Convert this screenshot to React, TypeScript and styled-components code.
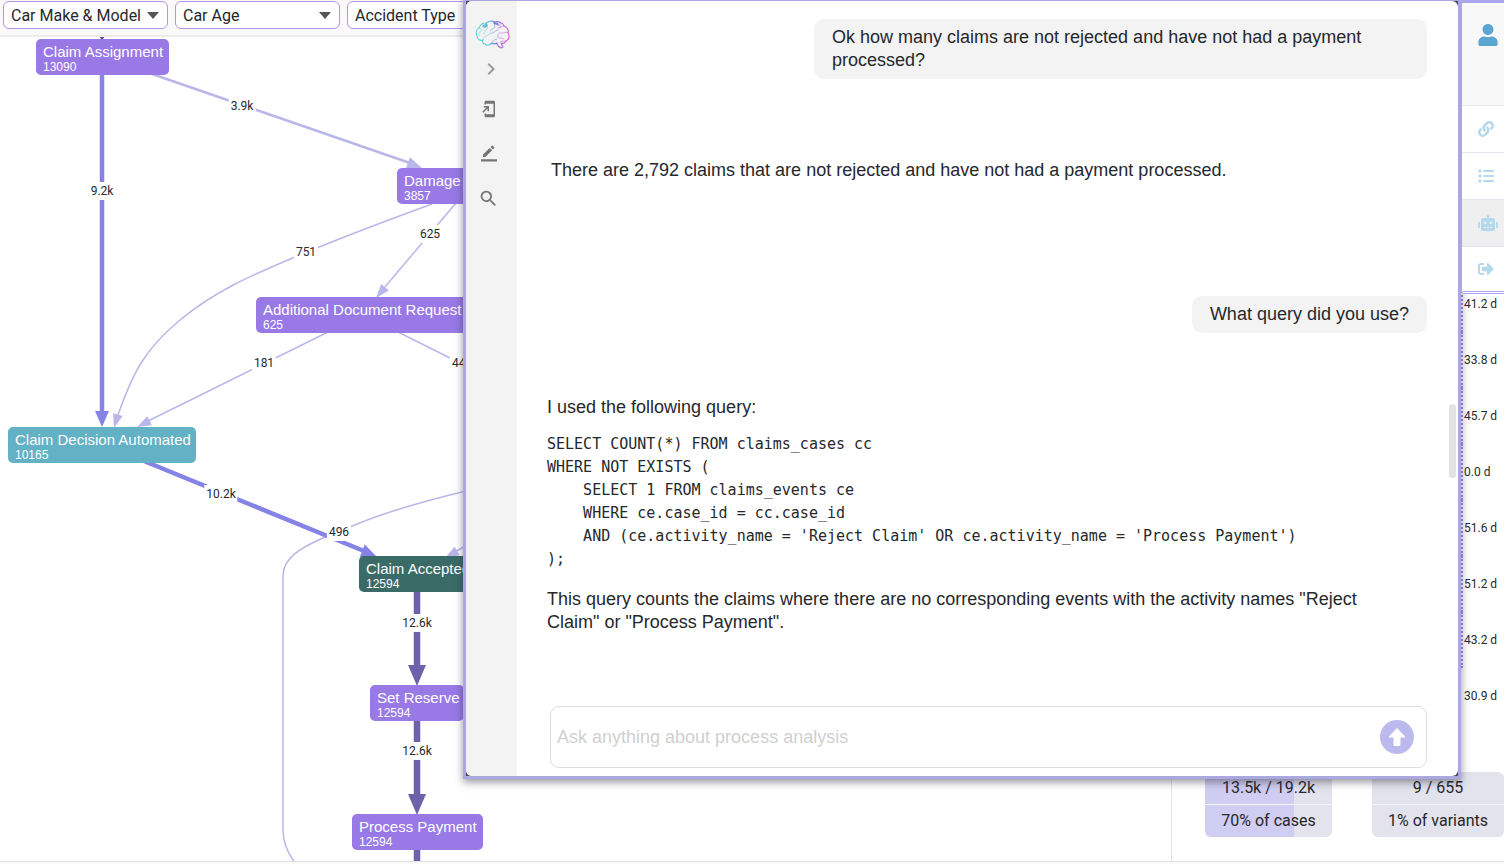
import React from 'react';
import styled, { createGlobalStyle } from 'styled-components';
import { FaUser, FaLink, FaRobot, FaSignOutAlt } from 'react-icons/fa';
import { FaList } from 'react-icons/fa6';
import { MdChevronRight, MdAddToHomeScreen, MdSearch } from 'react-icons/md';

const sans = '"Liberation Sans", Arial, sans-serif';
const roboto = 'Roboto, sans-serif';

const GlobalStyle = createGlobalStyle`
  *, *::before, *::after { box-sizing: border-box; }
  body { margin: 0; background: #fff; color: #25282c; font-family: ${roboto}; }
  button, input, select { font: inherit; color: inherit; margin: 0; }
  button { border: 0; padding: 0; background: none; cursor: pointer; }
`;

const Page = styled.div`
  position: relative;
  display: flex;
  flex-direction: column;
  height: 100vh;
  overflow: hidden;
`;

const FilterBar = styled.header`
  display: flex;
  flex: none;
  gap: 7px;
  height: 37px;
  padding: 1px 3px 0;
  background: #f9f9f9;
  border-bottom: 2px solid #ebebeb;
`;

const FilterField = styled.label`
  position: relative;
  flex: none;
  width: 165px;
  height: 28px;
`;

const FilterSelect = styled.select`
  appearance: none;
  width: 100%;
  height: 100%;
  padding: 0 7px;
  border: 1px solid #b294e8;
  border-radius: 6px;
  background: #fff;
  font-size: 16px;
`;

const FilterArrow = styled.svg`
  position: absolute;
  right: 9px;
  top: 11px;
  pointer-events: none;
`;

const Workspace = styled.div`
  display: flex;
  flex: 1;
  min-height: 0;
`;

const Canvas = styled.main`
  position: relative;
  flex: 1;
  overflow: hidden;
`;

const Edges = styled.svg`
  position: absolute;
  inset: 0;
  width: 100%;
  height: 100%;
`;

const Node = styled.div<{ $x: number; $y: number; $w: number; $fill?: string }>`
  position: absolute;
  left: ${(p) => p.$x}px;
  top: ${(p) => p.$y - 37}px;
  width: ${(p) => p.$w}px;
  height: 36px;
  padding: 4px 0 0 7px;
  border-radius: 5px;
  background: ${(p) => p.$fill ?? '#9879e6'};
  color: #fff;
  font-family: ${sans};
  white-space: nowrap;
`;

const NodeName = styled.div`
  font-size: 15px;
  line-height: 18px;
`;

const NodeCount = styled.div`
  font-size: 12px;
  line-height: 12px;
`;

const EdgeLabel = styled.span<{ $x: number; $y: number }>`
  position: absolute;
  left: ${(p) => p.$x}px;
  top: ${(p) => p.$y - 37}px;
  transform: translate(-50%, -50%);
  padding: 0 2px;
  background: #fff;
  font-size: 12px;
  line-height: 18px;
`;

const SidePanel = styled.aside`
  display: flex;
  flex: none;
  flex-direction: column;
  justify-content: space-between;
  width: 333px;
  padding: 239px 0 24px;
  border-left: 1px solid #e4e4e4;
`;

const Durations = styled.ul`
  align-self: flex-end;
  width: 43px;
  margin: 0;
  padding: 0;
  list-style: none;
`;

const Duration = styled.li`
  padding-left: 1px;
  border-left: 2px dotted #9c92dc;
  font-size: 12px;
  line-height: 56px;
  white-space: nowrap;
  &:last-child { border-left-color: transparent; }
`;

const Stats = styled.div`
  display: flex;
  gap: 40px;
  padding-left: 33px;
`;

const Stat = styled.div<{ $share: number; $grow?: boolean }>`
  flex: ${(p) => (p.$grow ? '1' : '0 0 127px')};
  border-radius: 6px;
  overflow: hidden;
  background: linear-gradient(to right, #d0cdf2 ${(p) => p.$share}%, #e3e3ee ${(p) => p.$share}%);
  font-size: 16px;
  line-height: 32px;
  text-align: center;
`;

const StatLine = styled.div`
  & + & { border-top: 1px solid #f4f4fb; }
`;

const Footer = styled.footer`
  flex: none;
  height: 3px;
  border-top: 1px solid #e2e2e2;
  background: #fafafa;
`;

const Menu = styled.nav`
  position: absolute;
  top: 0;
  right: 0;
  display: flex;
  flex-direction: column;
  width: 43px;
  background: #fff;
  border-top: 3px solid #aaa5ee;
  border-left: 1px solid #aaa5ee;
  border-bottom: 3px double #aaa5ee;
  border-bottom-left-radius: 4px;
`;

const MenuButton = styled.button<{ $active?: boolean }>`
  display: flex;
  align-items: center;
  height: 47px;
  padding-left: 16px;
  border-top: 1px solid #e3e6ee;
  background: ${(p) => (p.$active ? '#efefef' : '#fff')};
  color: #b5d8ec;
  &:last-child { height: 45px; }
`;

const ProfileButton = styled(MenuButton)`
  align-items: flex-start;
  height: 102px;
  padding: 21px 0 0 15px;
  border-top: 0;
  background: #f8f8f9;
  color: #5ba6d0;
`;

const ChatDialog = styled.section`
  position: absolute;
  top: -2px;
  bottom: 85px;
  left: 463px;
  right: 43px;
  border: 3px solid #aaa8de;
  background: #4b4b57;
  box-shadow: 0 3px 8px rgba(40, 40, 60, 0.5);
`;

const ChatBody = styled.div`
  display: flex;
  height: 100%;
  border-radius: 6px;
  overflow: hidden;
  background: #fff;
  font-family: ${sans};
  font-size: 18px;
  line-height: 23px;
`;

const Rail = styled.div`
  display: flex;
  flex: none;
  flex-direction: column;
  align-items: center;
  width: 51px;
  padding-top: 19px;
  background: #f3f3f3;
`;

const Logo = styled.svg`
  display: block;
  margin: 0 0 2px 2px;
`;

const RailButton = styled.button`
  display: flex;
  align-items: center;
  justify-content: center;
  width: 32px;
  height: 45px;
  margin-right: 6px;
  color: #757575;
`;

const ExpandButton = styled(RailButton)`
  height: 34px;
  margin: 0 2px 0 0;
  color: #9a9a9a;
`;

const Conversation = styled.div`
  position: relative;
  display: flex;
  flex: 1;
  flex-direction: column;
  min-width: 0;
  padding: 18px 31px 8px 30px;
`;

const UserMessage = styled.p`
  align-self: flex-end;
  max-width: 613px;
  margin: 0;
  padding: 7px 18px;
  border-radius: 10px;
  background: #f3f3f3;
`;

const Reply = styled.div<{ $inset?: boolean }>`
  margin: ${(p) => (p.$inset ? '80px 48px 114px 4px' : '63px 48px 0 0')};
`;

const Paragraph = styled.p`
  margin: 0;
`;

const Code = styled.pre`
  margin: 14px 0 17px;
  font-family: "DejaVu Sans Mono", monospace;
  font-size: 15px;
  line-height: 23px;
`;

const ScrollThumb = styled.div`
  position: absolute;
  top: 403px;
  right: 2px;
  width: 7px;
  height: 74px;
  border-radius: 4px;
  background: #e2e4e4;
`;

const Composer = styled.form`
  display: flex;
  align-items: center;
  height: 62px;
  margin: auto 0 0 3px;
  padding: 0 12px 0 6px;
  border: 1px solid #dedede;
  border-radius: 9px;
`;

const Prompt = styled.input`
  flex: 1;
  min-width: 0;
  padding: 0;
  border: 0;
  outline: 0;
  background: none;
  &::placeholder { color: #d0d0d0; opacity: 1; }
`;

const SendButton = styled.button`
  display: flex;
  align-items: center;
  justify-content: center;
  width: 34px;
  height: 34px;
  border-radius: 50%;
  background: #bcb9ee;
`;

const LIGHT = '#b9b6ea';
const MID = '#8683e6';
const DARK = '#6c61ab';

/* Solid arrowhead with its tip at (x, y), pointing along `angle` in degrees. */
function Head({ x, y, angle, length = 14, half = 5, fill = LIGHT }: {
  x: number; y: number; angle: number; length?: number; half?: number; fill?: string;
}) {
  return (
    <polygon
      points={`0,0 ${-length},${-half} ${-length},${half}`}
      fill={fill}
      transform={`translate(${x} ${y}) rotate(${angle})`}
    />
  );
}

function Filter({ label }: { label: string }) {
  return (
    <FilterField>
      <FilterSelect aria-label={label} defaultValue={label}>
        <option>{label}</option>
      </FilterSelect>
      <FilterArrow width="12" height="7" viewBox="0 0 12 7" aria-hidden="true">
        <path d="M0 0h12L6 7z" fill="#555" />
      </FilterArrow>
    </FilterField>
  );
}

function BrainLogo() {
  return (
    <Logo width="36" height="30" viewBox="0 0 36 30" fill="none" aria-hidden="true">
      <defs>
        <linearGradient id="brain" gradientUnits="userSpaceOnUse" x1="0" y1="14" x2="36" y2="14">
          <stop offset="0" stopColor="#62dfe0" />
          <stop offset="0.4" stopColor="#62c6de" />
          <stop offset="0.58" stopColor="#7c78e0" />
          <stop offset="0.78" stopColor="#c66ae0" />
          <stop offset="1" stopColor="#e060d4" />
        </linearGradient>
      </defs>
      <g stroke="url(#brain)" strokeLinecap="round" strokeLinejoin="round">
        <path
          strokeWidth="1.2"
          d="M8 20c-3 1-6-1-6-4-2-3 0-7 2-8 1-3 4-5 7-5 3-2 7-2 9-1 4-1 8 1 9 4 3 1 5 4 4 7 2 3 1 7-2 8-1 2-3 3-5 2l2 4-2 1c-2-1-4-3-4-5-2 1-4 1-5 0-2 2-5 3-7 1-2 0-3-2-2-4z"
        />
        <path
          strokeWidth="0.8"
          opacity="0.75"
          d="M8 20c1-2 0-3 3-4s3-3 6-3 3-3 6-3M4 8c2 0 3 1 2 3s-3 2-2 5M11 3c-1 3 2 3 1 6s-4 2-3 5M20 2c-2 2 1 4-1 6s-4 1-4 3M29 6c-3 0-3 2-6 2M33 13c-3-2-5 1-7 0s-4 2-3 4 5 0 6 2M17 23c0-3 3-3 5-4M31 21c-2 1-4-1-6 1M25 3c-1 2 1 3 0 5"
        />
      </g>
      <path d="M8 5l4-2 1 3-3 2-3-1z" fill="#4fb4cc" opacity="0.8" />
      <path d="M18 2l5 1 1 3-2-1-3-1z" fill="#5560d0" opacity="0.8" />
    </Logo>
  );
}

const query = `SELECT COUNT(*) FROM claims_cases cc
WHERE NOT EXISTS (
    SELECT 1 FROM claims_events ce
    WHERE ce.case_id = cc.case_id
    AND (ce.activity_name = 'Reject Claim' OR ce.activity_name = 'Process Payment')
);`;

const nodes = [
  { name: 'Claim Assignment', count: 13090, x: 36, y: 39, w: 133 },
  { name: 'Damage', count: 3857, x: 397, y: 168, w: 120 },
  { name: 'Additional Document Request', count: 625, x: 256, y: 297, w: 240 },
  { name: 'Claim Decision Automated', count: 10165, x: 8, y: 427, w: 188, fill: '#62b1c5' },
  { name: 'Claim Accepted', count: 12594, x: 359, y: 556, w: 117, fill: '#3a6b67' },
  { name: 'Set Reserve', count: 12594, x: 370, y: 685, w: 94 },
  { name: 'Process Payment', count: 12594, x: 352, y: 814, w: 131 },
];

const edgeLabels = [
  { text: '9.2k', x: 102, y: 191 },
  { text: '3.9k', x: 242, y: 106 },
  { text: '751', x: 306, y: 252 },
  { text: '625', x: 430, y: 234 },
  { text: '181', x: 264, y: 363 },
  { text: '444', x: 462, y: 363 },
  { text: '10.2k', x: 221, y: 494 },
  { text: '496', x: 339, y: 532 },
  { text: '12.6k', x: 417, y: 623 },
  { text: '12.6k', x: 417, y: 751 },
];

const durations = ['41.2 d', '33.8 d', '45.7 d', '0.0 d', '51.6 d', '51.2 d', '43.2 d', '30.9 d'];

export default function App() {
  return (
    <Page>
      <GlobalStyle />
      <FilterBar>
        <Filter label="Car Make &amp; Model" />
        <Filter label="Car Age" />
        <Filter label="Accident Type" />
      </FilterBar>

      <Workspace>
        <Canvas>
          <Edges aria-hidden="true">
            <g transform="translate(0 -37)" fill="none">
              <path d="M99 36h6l-2 3h-2z" fill="#5a4d96" />
              <g stroke={LIGHT} strokeWidth="1.5">
                <path d="M152 74L410 163" strokeWidth="2.5" />
                <path d="M432 204C380 223 340 238 295 257S215 291 180 320S133 372 118 415" />
                <path d="M456 203L384 288" />
                <path d="M328 332L148 421" />
                <path d="M398 332L470 368" />
                <path d="M470 490C420 502 375 516 350 527L325 537C300 548 283 558 283 576V830C283 842 288 854 296 864" />
                <path d="M474 541L455 552" />
              </g>
              <g stroke={MID} strokeWidth="4.500">
                <path d="M102 74V413" />
                <path d="M144 461L364 551" />
              </g>
              <g stroke={DARK} strokeWidth="6.500">
                <path d="M417 591V667" />
                <path d="M417 720V796" />
                <path d="M417 849V864" />
              </g>
              <Head x={422} y={168} angle={20} length={15} half={6} />
              <Head x={114} y={428} angle={106} />
              <Head x={376} y={298} angle={130} />
              <Head x={137} y={427} angle={154} />
              <Head x={445} y={558} angle={150} />
              <Head x={102} y={427} angle={90} length={16} half={7} fill={MID} />
              <Head x={377} y={557} angle={22} length={16} half={7} fill={MID} />
              <Head x={417} y={686} angle={90} length={21} half={9} fill={DARK} />
              <Head x={417} y={815} angle={90} length={21} half={9} fill={DARK} />
            </g>
          </Edges>
          {edgeLabels.map((l) => (
            <EdgeLabel key={`${l.x}-${l.y}`} $x={l.x} $y={l.y}>{l.text}</EdgeLabel>
          ))}
          {nodes.map((n) => (
            <Node key={n.name} $x={n.x} $y={n.y} $w={n.w} $fill={n.fill}>
              <NodeName>{n.name}</NodeName>
              <NodeCount>{n.count}</NodeCount>
            </Node>
          ))}
        </Canvas>

        <SidePanel>
          <Durations>
            {durations.map((d) => <Duration key={d}>{d}</Duration>)}
          </Durations>
          <Stats>
            <Stat $share={70}>
              <StatLine>13.5k / 19.2k</StatLine>
              <StatLine>70% of cases</StatLine>
            </Stat>
            <Stat $share={0} $grow>
              <StatLine>9 / 655</StatLine>
              <StatLine>1% of variants</StatLine>
            </Stat>
          </Stats>
        </SidePanel>
      </Workspace>
      <Footer />

      <ChatDialog aria-label="Process assistant">
        <ChatBody>
          <Rail>
            <BrainLogo />
            <ExpandButton aria-label="Expand"><MdChevronRight size={24} /></ExpandButton>
            <RailButton aria-label="Open in window"><MdAddToHomeScreen size={18} /></RailButton>
            <RailButton aria-label="New chat">
              <svg width="16" height="17" viewBox="0 0 16 17" fill="currentColor">
                <path d="M2 9.600V12h2.400l6.700-6.700-2.400-2.400zM13.200 3.200a.7.7 0 0 0 0-1L11.800.8a.7.7 0 0 0-1 0L9.500 2.100l2.400 2.400z" />
                <path d="M0 14.200h16v2.300H0z" />
              </svg>
            </RailButton>
            <RailButton aria-label="Search"><MdSearch size={21} /></RailButton>
          </Rail>
          <Conversation>
            <UserMessage>
              Ok how many claims are not rejected and have not had a payment processed?
            </UserMessage>
            <Reply $inset>
              <Paragraph>There are 2,792 claims that are not rejected and have not had a payment processed.</Paragraph>
            </Reply>
            <UserMessage>What query did you use?</UserMessage>
            <Reply>
              <Paragraph>I used the following query:</Paragraph>
              <Code>{query}</Code>
              <Paragraph>
                This query counts the claims where there are no corresponding events with the activity names "Reject
                Claim" or "Process Payment".
              </Paragraph>
            </Reply>
            <Composer onSubmit={(e) => e.preventDefault()}>
              <Prompt aria-label="Message" placeholder="Ask anything about process analysis" />
              <SendButton aria-label="Send">
                <svg width="18" height="20" viewBox="0 0 18 20" aria-hidden="true">
                  <path
                    d="M9 1.500L17 10H12V18.500H6V10H1z"
                    fill="#fff"
                    stroke="#fff"
                    strokeWidth="1"
                    strokeLinejoin="round"
                  />
                </svg>
              </SendButton>
            </Composer>
            <ScrollThumb />
          </Conversation>
        </ChatBody>
      </ChatDialog>

      <Menu aria-label="Main menu">
        <ProfileButton aria-label="Profile"><FaUser size={22} /></ProfileButton>
        <MenuButton aria-label="Links"><FaLink size={16} /></MenuButton>
        <MenuButton aria-label="List"><FaList size={16} /></MenuButton>
        <MenuButton aria-label="Assistant" $active><FaRobot size={20} /></MenuButton>
        <MenuButton aria-label="Sign out"><FaSignOutAlt size={16} /></MenuButton>
      </Menu>
    </Page>
  );
}
